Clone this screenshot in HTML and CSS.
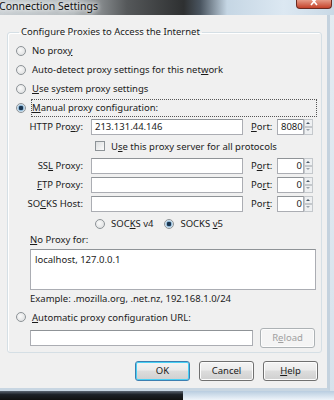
FILE: index.html
```html
<!DOCTYPE html>
<html lang="en">
<head>
  <meta charset="UTF-8" />
  <title>Connection Settings</title>
  <link rel="stylesheet" href="styles.css">
</head>
<body>
  <div class="screen">
    <div class="titlebar">
      <span class="title">Connection Settings</span>
      <span class="close">
        <svg width="8" height="6" viewBox="0 0 8 6"><path d="M1 -2 L7 5 M7 -2 L1 5" stroke="#fff" stroke-width="1.6"/></svg>
      </span>
    </div>

    <div class="frame">
      <div class="dialog">
        <fieldset class="group">
          <legend>Configure Proxies to Access the Internet</legend>

          <div class="opt"><span class="radio"></span><span>No prox<u>y</u></span></div>
          <div class="opt"><span class="radio"></span><span>Auto-detect proxy settings for this net<u>w</u>ork</span></div>
          <div class="opt"><span class="radio"></span><span><u>U</u>se system proxy settings</span></div>
          <div class="opt"><span class="radio on"></span><span class="focus"><u>M</u>anual proxy configuration:</span></div>

          <div class="row">
            <label class="lbl">HTTP Pro<u>x</u>y:</label>
            <div class="field host">213.131.44.146</div>
            <label class="plbl"><u>P</u>ort:</label>
            <div class="field port">8080</div>
            <div class="spin"><span class="up"></span><span class="down"></span></div>
          </div>

          <div class="check-row">
            <span class="check"></span><span>U<u>s</u>e this proxy server for all protocols</span>
          </div>

          <div class="row">
            <label class="lbl">SS<u>L</u> Proxy:</label>
            <div class="field host"></div>
            <label class="plbl">P<u>o</u>rt:</label>
            <div class="field port">0</div>
            <div class="spin"><span class="up"></span><span class="down"></span></div>
          </div>

          <div class="row">
            <label class="lbl"><u>F</u>TP Proxy:</label>
            <div class="field host"></div>
            <label class="plbl">Po<u>r</u>t:</label>
            <div class="field port">0</div>
            <div class="spin"><span class="up"></span><span class="down"></span></div>
          </div>

          <div class="row">
            <label class="lbl">SO<u>C</u>KS Host:</label>
            <div class="field host"></div>
            <label class="plbl">Por<u>t</u>:</label>
            <div class="field port">0</div>
            <div class="spin"><span class="up"></span><span class="down"></span></div>
          </div>

          <div class="socks-row">
            <div class="opt"><span class="radio"></span><span>SOC<u>K</u>S v4</span></div>
            <div class="opt"><span class="radio on"></span><span>SOCKS <u>v</u>5</span></div>
          </div>

          <div class="indent caption"><u>N</u>o Proxy for:</div>
          <div class="indent textarea">localhost, 127.0.0.1</div>
          <div class="indent example">Example: .mozilla.org, .net.nz, 192.168.1.0/24</div>

          <div class="opt auto"><span class="radio"></span><span><u>A</u>utomatic proxy configuration URL:</span></div>
          <div class="indent url-row">
            <div class="field url"></div>
            <div class="btn disabled">R<u>e</u>load</div>
          </div>
        </fieldset>

        <div class="buttons">
          <div class="btn default">OK</div>
          <div class="btn">Cancel</div>
          <div class="btn"><u>H</u>elp</div>
        </div>
      </div>
    </div>

    <div class="taskbar">
      <div class="dark"></div>
      <div class="light"></div>
    </div>
  </div>
</body>
</html>
```

FILE: styles.css
```css
body {
  margin: 0;
  background: #dfe8f0;
  font-family: "Noto Sans", "Open Sans", sans-serif;
  font-size: 9.5px;
  color: #1b1b1b;
}

u {
  text-decoration: underline;
  text-underline-offset: 1px;
}

.screen {
  width: 334px;
  height: 400px;
  display: flex;
  flex-direction: column;
  overflow: hidden;
  background: linear-gradient(to bottom, #e4ecf2, #d6e2ec);
}

/* window title (aero glass) */
.titlebar {
  height: 15px;
  flex: none;
  display: flex;
  justify-content: space-between;
  align-items: flex-start;
  background: linear-gradient(to right, #c9cfd3 0%, #b6bcbf 22%, #55585a 38%, #2e3031 55%, #4a5560 60%, #c5d6e4 68%, #dce8f2 85%, #c9d9e6 100%);
}

.title {
  font-size: 10.5px;
  line-height: 13px;
  color: #101010;
  margin-left: -1px;
  text-shadow: 0 0 6px #fff, 0 0 4px #fff;
}

.close {
  width: 34px;
  height: 8px;
  margin-right: 2px;
  border: 1px solid #6b2a20;
  border-top: none;
  border-radius: 0 0 4px 4px;
  background: linear-gradient(to bottom, #e59a86, #c5432b);
  display: flex;
  justify-content: center;
  align-items: flex-start;
}

.frame {
  height: 373px;
  flex: none;
  width: 327px;
  border-right: 3px solid #c4d2de;
  border-bottom: 3px solid #c8d6e2;
  background: #f0f0f0;
}

.dialog {
  padding: 11px 0 0 7px;
}

/* group box */
.group {
  margin: 0;
  padding: 3px 0 3px 8px;
  width: 305px;
  border: 1px solid #d5dfe5;
  border-radius: 3px;
  box-shadow: inset 1px 1px 0 #fff;
  min-inline-size: 0;
}

.group legend {
  padding: 0 2px;
  margin-left: 3px;
  line-height: 12px;
}

.opt {
  height: 19px;
  display: flex;
  align-items: center;
  gap: 6px;
}

.radio {
  width: 8px;
  height: 8px;
  border-radius: 50%;
  border: 1px solid #8d9397;
  background: radial-gradient(circle at 40% 40%, #fafafa, #d8dadb);
  flex: none;
}

.radio.on {
  background: radial-gradient(circle, #1a3550 0 2px, #8bb6d6 2.5px, #e6eef4 4px);
}

.focus {
  flex: 1;
  margin-right: 5px;
  outline: 1px dotted #555;
  padding: 1px 0;
  line-height: 14px;
}

.row {
  height: 19px;
  display: flex;
  align-items: center;
}

.lbl {
  width: 67px;
  text-align: right;
  margin-right: 8px;
}

.plbl {
  width: 26px;
  margin-left: 8px;
}

.field {
  height: 14px;
  border: 1px solid #abadb3;
  border-top-color: #8f9397;
  background: #fff;
  line-height: 14px;
  padding: 0 3px;
  box-sizing: content-box;
}

.host {
  width: 144px;
}

.port {
  width: 21px;
  padding-right: 1px;
  text-align: right;
}

.spin {
  width: 9px;
  height: 16px;
  display: flex;
  flex-direction: column;
}

.spin span {
  flex: 1;
  border: 1px solid #c4c8cc;
  background: #eef0f2;
  position: relative;
}

.spin span::after {
  content: "";
  position: absolute;
  left: 1px;
  top: 2px;
  border-left: 2.5px solid transparent;
  border-right: 2.5px solid transparent;
}

.spin .up::after {
  border-bottom: 2px solid #4a5a6a;
}

.spin .down::after {
  border-top: 2px solid #9aa2aa;
  top: 1px;
}

.check-row {
  height: 20px;
  display: flex;
  align-items: center;
  gap: 6px;
  padding-left: 79px;
}

.check {
  width: 8px;
  height: 8px;
  border: 1px solid #8d9397;
  background: linear-gradient(135deg, #dcdedf, #fbfbfb);
}

.socks-row {
  height: 21px;
  display: flex;
  align-items: center;
  gap: 11px;
  padding-left: 79px;
}

.indent {
  margin-left: 14px;
}

.caption {
  line-height: 12px;
}

.textarea {
  margin-top: 3px;
  margin-right: 5px;
  height: 33px;
  border: 1px solid #abadb3;
  border-top-color: #8f9397;
  background: #fff;
  padding: 3px 4px;
}

.example {
  line-height: 16px;
  margin-top: 1px;
}

.auto {
  height: 20px;
}

.url-row {
  height: 22px;
  display: flex;
  align-items: center;
  gap: 7px;
}

.url {
  width: 215px;
}

.btn {
  width: 53px;
  height: 18px;
  border: 1px solid #707070;
  border-radius: 3px;
  background: linear-gradient(to bottom, #f4f4f4 0%, #ebebeb 45%, #dddddd 50%, #cfcfcf 100%);
  box-shadow: inset 0 0 0 1px #fcfcfc;
  text-align: center;
  line-height: 18px;
}

.btn.disabled {
  color: #a0a0a0;
  border-color: #adb2b5;
  background: #f4f4f4;
}

.btn.default {
  border-color: #3c7fb1;
  box-shadow: inset 0 0 0 1px #48d0f5;
}

.buttons {
  margin-top: 8px;
  display: flex;
  justify-content: flex-end;
  gap: 9px;
  padding-right: 9px;
}

.taskbar {
  flex: 1;
  display: flex;
}

.taskbar .dark {
  width: 183px;
  background: linear-gradient(to bottom, #5a6470, #1c2026 40%, #111 100%);
}

.taskbar .light {
  flex: 1;
  background: linear-gradient(to bottom, #b9cde0, #eef4fa);
}
```
